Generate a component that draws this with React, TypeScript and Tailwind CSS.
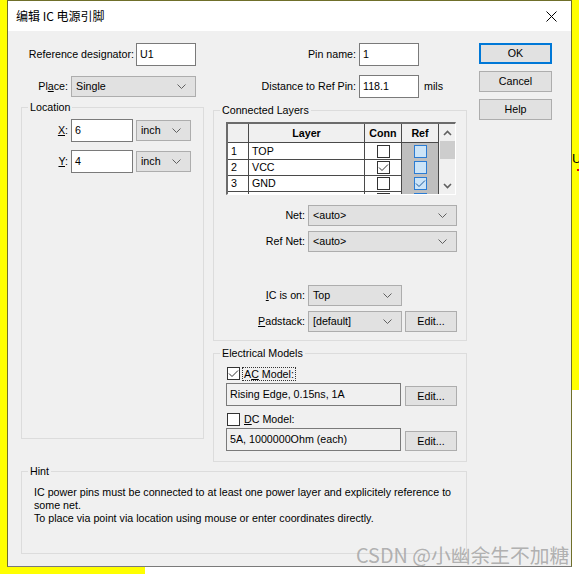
import React from "react"

const Chevron = ({ color = "#606060" }: { color?: string }) => (
  <svg width="9" height="5" viewBox="0 0 9 5">
    <path d="M0.5 0.5 L4.5 4.5 L8.5 0.5" fill="none" stroke={color} strokeWidth="1" />
  </svg>
)

function Combo({ value, className = "" }: { value: string; className?: string }) {
  return (
    <div className={`flex h-[21px] items-center justify-between border border-[#adadad] bg-[#e1e1e1] pl-[4px] pr-[9px] ${className}`}>
      <span>{value}</span>
      <Chevron />
    </div>
  )
}

function TextBox({ value, className = "" }: { value: string; className?: string }) {
  return (
    <div className={`flex h-[23px] items-center border border-[#7a7a7a] bg-white pl-[3px] ${className}`}>
      {value}
    </div>
  )
}

function Button({ label, className = "" }: { label: string; className?: string }) {
  return (
    <div className={`flex items-center justify-center border border-[#adadad] bg-[#e1e1e1] ${className}`}>
      {label}
    </div>
  )
}

function Check({ checked, blue }: { checked?: boolean; blue?: boolean }) {
  return (
    <span
      className={`flex h-[13px] w-[13px] items-center justify-center border ${
        blue ? "border-[#2b7cd3] bg-[#cce4f7]" : "border-[#333333] bg-white"
      }`}
    >
      {checked && (
        <svg width="11" height="11" viewBox="0 0 11 11">
          <path d="M1 5.5 L4 8.5 L10 2.5" fill="none" stroke={blue ? "#1d5a9c" : "#333333"} strokeWidth="1" />
        </svg>
      )}
    </span>
  )
}

function GroupBox({ title, className = "", children }: { title: string; className?: string; children?: React.ReactNode }) {
  return (
    <fieldset className={`border border-[#dcdcdc] ${className}`}>
      <legend className="ml-[6px] px-[2px] leading-[14px]">{title}</legend>
      {children}
    </fieldset>
  )
}

const layers = [
  { n: "1", name: "TOP", conn: false, ref: false },
  { n: "2", name: "VCC", conn: true, ref: false },
  { n: "3", name: "GND", conn: false, ref: true },
  { n: "4", name: "", conn: false, ref: false },
]

function LayerTable() {
  return (
    <div className="ml-[12px] mt-[5px] flex h-[73px] w-[230px] overflow-hidden border-t-2 border-l-2 border-t-[#6b6b6b] border-l-[#6b6b6b] border-b border-r border-b-white border-r-white bg-white">
      <div className="w-[211px]">
        <div className="grid h-[19px] grid-cols-[21px_116px_37px_37px] bg-[#f0f0f0] font-bold">
          <div className="border-r border-b border-[#4a4a4a]" />
          <div className="flex items-center justify-center border-r border-b border-[#4a4a4a]">Layer</div>
          <div className="flex items-center justify-center border-r border-b border-[#4a4a4a]">Conn</div>
          <div className="flex items-center justify-center border-r border-b border-[#4a4a4a]">Ref</div>
        </div>
        {layers.map((l) => (
          <div key={l.n} className="grid h-[16px] grid-cols-[21px_116px_37px_37px]">
            <div className="flex items-center border-r border-b border-[#4a4a4a] pl-[3px]">{l.n}</div>
            <div className="flex items-center border-r border-b border-[#4a4a4a] pl-[3px]">{l.name}</div>
            <div className="flex items-center justify-center border-r border-b border-[#4a4a4a]">
              <Check checked={l.conn} />
            </div>
            <div className="flex items-center justify-center border-r border-b border-[#4a4a4a] bg-[#bfbfbf]">
              <Check checked={l.ref} blue />
            </div>
          </div>
        ))}
      </div>
      <div className="flex w-[16px] flex-col items-center bg-[#f0f0f0]">
        <div className="flex h-[17px] items-center justify-center">
          <svg width="9" height="6" viewBox="0 0 9 6">
            <path d="M1 5 L4.5 1.5 L8 5" fill="none" stroke="#606060" strokeWidth="1.6" />
          </svg>
        </div>
        <div className="h-[18px] w-[15px] bg-[#cdcdcd]" />
        <div className="flex-1" />
        <div className="flex h-[17px] items-center justify-center">
          <svg width="9" height="6" viewBox="0 0 9 6">
            <path d="M1 1 L4.5 4.5 L8 1" fill="none" stroke="#606060" strokeWidth="1.6" />
          </svg>
        </div>
      </div>
    </div>
  )
}

export default function App() {
  return (
    <div className="relative h-[574px] w-[579px] overflow-hidden bg-white font-['Liberation_Sans','Noto_Sans_CJK_SC',sans-serif] text-[10.7px] text-black">
      {/* desktop behind the dialog */}
      <div className="absolute left-0 top-0 h-full w-[7px] bg-[#ffff00]" />
      <div className="absolute right-0 top-0 h-[390px] w-[8px] bg-[#ffff00]" />
      <div className="absolute bottom-0 left-0 h-[8px] w-[145px] bg-[#ffff00]" />
      <div className="absolute left-[572px] top-[152px] text-[13px] leading-[14px]">U</div>
      <div className="absolute left-[577px] top-[169px] h-[2px] w-[2px] bg-[#e00000]" />

      <div className="absolute left-[7px] top-0 flex h-[567px] w-[565px] flex-col border border-t-[#6f6f2a] border-l-[#6f6f2a] border-r-[#6f6f2a] border-b-[#7a7a7a] bg-[#f0f0f0]">
        {/* title bar */}
        <div className="flex h-[30px] items-center justify-between bg-white pl-[8px]">
          <span className="font-['Noto_Sans_CJK_SC',sans-serif] text-[12px]">编辑 IC 电源引脚</span>
          <svg className="mr-[14px]" width="11" height="11" viewBox="0 0 11 11">
            <path d="M0.5 0.5 L10.5 10.5 M10.5 0.5 L0.5 10.5" stroke="#000" strokeWidth="1" />
          </svg>
        </div>

        <div className="flex flex-1">
          <div className="flex w-[463px] flex-col pl-[13px] pt-[12px]">
            {/* top rows */}
            <div className="flex h-[23px] items-center">
              <div className="flex w-[182px] items-center justify-end pr-[7px]">
                <span>Reference designator:</span>
                <TextBox value="U1" className="ml-[2px] w-[60px]" />
              </div>
              <div className="ml-[10px] flex items-center">
                <span className="w-[143px] text-right">Pin name:</span>
                <TextBox value="1" className="ml-[3px] w-[60px]" />
              </div>
            </div>
            <div className="mt-[9px] flex h-[22px] items-center">
              <div className="flex w-[182px] items-center justify-end pr-[7px]">
                <span>
                  Pl<span className="underline">a</span>ce:
                </span>
                <Combo value="Single" className="ml-[3px] w-[125px]" />
              </div>
              <div className="ml-[10px] flex items-center">
                <span className="w-[143px] text-right">Distance to Ref Pin:</span>
                <TextBox value="118.1" className="ml-[3px] h-[22px] w-[60px]" />
                <span className="ml-[5px]">mils</span>
              </div>
            </div>

            {/* group boxes */}
            <div className="mt-[3px] flex items-start">
              <GroupBox title="Location" className="h-[339px] w-[183px]">
                <div className="mt-[5px] flex items-center">
                  <span className="w-[46px] text-right">
                    <span className="underline">X</span>:
                  </span>
                  <TextBox value="6" className="ml-[3px] w-[62px]" />
                  <Combo value="inch" className="ml-[3px] w-[55px]" />
                </div>
                <div className="mt-[8px] flex items-center">
                  <span className="w-[46px] text-right">
                    <span className="underline">Y</span>:
                  </span>
                  <TextBox value="4" className="ml-[3px] w-[62px]" />
                  <Combo value="inch" className="ml-[3px] w-[55px]" />
                </div>
              </GroupBox>

              <div className="ml-[9px] mt-[3px] flex flex-col">
                <GroupBox title="Connected Layers" className="h-[238px] w-[254px]">
                  <LayerTable />
                  <div className="mt-[10px] flex items-center">
                    <span className="w-[91px] text-right">Net:</span>
                    <Combo value="<auto>" className="ml-[3px] w-[149px]" />
                  </div>
                  <div className="mt-[5px] flex items-center">
                    <span className="w-[91px] text-right">Ref Net:</span>
                    <Combo value="<auto>" className="ml-[3px] w-[149px]" />
                  </div>
                  <div className="mt-[33px] flex items-center">
                    <span className="w-[91px] text-right">
                      <span className="underline">I</span>C is on:
                    </span>
                    <Combo value="Top" className="ml-[3px] w-[94px]" />
                  </div>
                  <div className="mt-[5px] flex items-center">
                    <span className="w-[91px] text-right">
                      <span className="underline">P</span>adstack:
                    </span>
                    <Combo value="[default]" className="ml-[3px] w-[94px]" />
                    <Button label="Edit..." className="ml-[3px] h-[21px] w-[52px]" />
                  </div>
                </GroupBox>

                <GroupBox title="Electrical Models" className="mt-[5px] h-[116px] w-[254px]">
                  <div className="ml-[13px] mt-[7px] flex h-[13px] items-center">
                    <Check checked />
                    <span className="ml-[2px] border border-dotted border-[#333] px-[1px] leading-[12px]">
                      A<span className="underline">C</span> Model:
                    </span>
                  </div>
                  <div className="ml-[12px] mt-[3px] flex items-end">
                    <div className="flex h-[23px] w-[175px] items-center border border-[#7a7a7a] bg-[#f0f0f0] pl-[3px]">
                      Rising Edge, 0.15ns, 1A
                    </div>
                    <Button label="Edit..." className="ml-[4px] h-[20px] w-[52px]" />
                  </div>
                  <div className="ml-[13px] mt-[7px] flex h-[13px] items-center">
                    <Check />
                    <span className="ml-[3px] px-[1px]">
                      <span className="underline">D</span>C Model:
                    </span>
                  </div>
                  <div className="ml-[12px] mt-[2px] flex items-end">
                    <div className="flex h-[23px] w-[175px] items-center border border-[#7a7a7a] bg-[#f0f0f0] pl-[3px]">
                      5A, 1000000Ohm (each)
                    </div>
                    <Button label="Edit..." className="ml-[4px] h-[20px] w-[52px]" />
                  </div>
                </GroupBox>
              </div>
            </div>

            <GroupBox title="Hint" className="mt-[2px] h-[90px] w-[446px]">
              <p className="mt-[8px] whitespace-nowrap pl-[12px] leading-[13px]">
                IC power pins must be connected to at least one power layer and explicitely reference to
                <br />
                some net.
                <br />
                To place via point via location using mouse or enter coordinates directly.
              </p>
            </GroupBox>
          </div>

          {/* dialog buttons */}
          <div className="ml-[8px] flex flex-col pt-[12px]">
            <div className="flex h-[21px] w-[73px] items-center justify-center border-2 border-[#0078d7] bg-[#e1e1e1]">OK</div>
            <Button label="Cancel" className="mt-[7px] h-[21px] w-[73px]" />
            <Button label="Help" className="mt-[7px] h-[21px] w-[73px]" />
          </div>
        </div>
      </div>

      {/* watermark */}
      <div className="absolute left-[356px] top-[543px] font-['Noto_Sans_CJK_SC',sans-serif] text-[19.8px] leading-[24px] text-[#a8a8a8]/90">
        CSDN @小幽余生不加糖
      </div>
    </div>
  )
}
